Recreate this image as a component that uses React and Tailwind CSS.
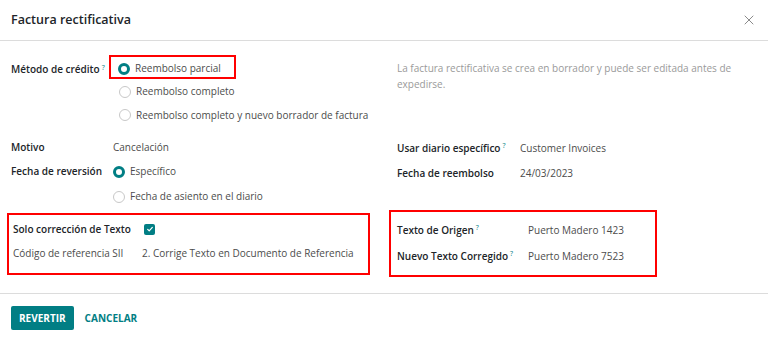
import { X } from "lucide-react";

const font = { fontFamily: '"Open Sans", "Noto Sans", sans-serif' };

const Help = () => (
  <sup className="ml-[2px] text-[7px] font-normal text-[#017e84]">?</sup>
);

const Radio = ({ checked, children }) => (
  <div className="flex items-center gap-[5px] whitespace-nowrap">
    {checked ? (
      <span className="inline-block h-[12px] w-[12px] rounded-full border-[3.5px] border-[#017e84] bg-white" />
    ) : (
      <span className="inline-block h-[12px] w-[12px] rounded-full border border-[#c8c8c8] bg-white" />
    )}
    <span className="text-[#4c4c4c]">{children}</span>
  </div>
);

const Check = () => (
  <span className="inline-flex h-[11px] w-[11px] items-center justify-center rounded-[2px] bg-[#017e84]">
    <svg viewBox="0 0 12 12" className="h-[8px] w-[8px]" fill="none">
      <path d="M2.5 6.5l2.3 2.2L9.5 3.5" stroke="white" strokeWidth="1.8" strokeLinecap="round" strokeLinejoin="round" />
    </svg>
  </span>
);

export default function App() {
  return (
    <div style={font} className="h-[342px] w-[768px] overflow-hidden bg-white text-[10px] text-[#212529]">
      <div className="flex h-[41px] items-center justify-between border-b border-[#dcdcdc] px-[11px]">
        <h4 className="text-[12.5px] font-semibold text-[#212529]">Factura rectificativa</h4>
        <X className="h-[16px] w-[16px] text-[#6c6c6c]" strokeWidth={1.2} />
      </div>

      <div className="flex h-[252px] pt-[14px]">
        <div className="w-[384px] pl-[7px]">
          <div className="flex items-start pl-[4px]">
            <div className="w-[98px] whitespace-nowrap pt-[7px] font-semibold">
              Método de crédito<Help />
            </div>
            <div className="flex flex-col items-start">
              <div className="flex h-[24px] w-[127px] items-center border-2 border-[#f00] pl-[7px] pt-[3px]">
                <Radio checked>Reembolso parcial</Radio>
              </div>
              <div className="flex h-[25px] items-center pl-[10px]">
                <Radio>Reembolso completo</Radio>
              </div>
              <div className="flex h-[22px] items-center pl-[10px]">
                <Radio>Reembolso completo y nuevo borrador de factura</Radio>
              </div>
            </div>
          </div>

          <div className="mt-[9px] flex h-[24px] items-center pl-[4px]">
            <div className="w-[102px] font-semibold">Motivo</div>
            <div className="text-[#4c4c4c]">Cancelación</div>
          </div>
          <div className="flex h-[25px] items-center pl-[4px]">
            <div className="w-[102px] whitespace-nowrap font-semibold">Fecha de reversión</div>
            <Radio checked>Específico</Radio>
          </div>
          <div className="flex h-[25px] items-center pl-[106px]">
            <Radio>Fecha de asiento en el diario</Radio>
          </div>

          <div className="mt-[4px] w-[363px] border-2 border-[#f00] pb-[8px] pl-[2px] pt-[2px]">
            <div className="flex h-[24px] items-center pl-[2px]">
              <div className="w-[131px] whitespace-nowrap font-semibold">Solo corrección de Texto</div>
              <Check />
            </div>
            <div className="flex h-[24px] items-center whitespace-nowrap pl-[2px]">
              <div className="w-[129px] text-[#4c4c4c]">Código de referencia SII</div>
              <div className="text-[#4c4c4c]">2. Corrige Texto en Documento de Referencia</div>
            </div>
          </div>
        </div>

        <div className="flex-1 pl-[13px] pr-[34px]">
          <p className="mt-[5px] leading-[16px] text-[#9a9a9a]">
            La factura rectificativa se crea en borrador y puede ser editada antes de expedirse.
          </p>
          <div className="mt-[44px] flex h-[24px] items-center whitespace-nowrap">
            <div className="w-[123px] font-semibold">
              Usar diario específico<Help />
            </div>
            <div className="text-[#4c4c4c]">Customer Invoices</div>
          </div>
          <div className="flex h-[26px] items-center whitespace-nowrap">
            <div className="w-[123px] font-semibold">Fecha de reembolso</div>
            <div className="text-[#4c4c4c]">24/03/2023</div>
          </div>

          <div className="-ml-[8px] mt-[24px] w-[268px] whitespace-nowrap border-2 border-[#f00] pb-[6px] pl-[6px] pt-[5px]">
            <div className="flex h-[26px] items-center">
              <div className="w-[131px] font-semibold">
                Texto de Origen<Help />
              </div>
              <div className="text-[#4c4c4c]">Puerto Madero 1423</div>
            </div>
            <div className="flex h-[26px] items-center">
              <div className="w-[131px] font-semibold">
                Nuevo Texto Corregido<Help />
              </div>
              <div className="text-[#4c4c4c]">Puerto Madero 7523</div>
            </div>
          </div>
        </div>
      </div>

      <div className="flex h-[49px] items-center gap-[11px] border-t border-[#dcdcdc] px-[11px]">
        <button className="h-[24px] rounded-[2px] bg-[#017e84] px-[8px] text-[10px] font-bold text-white">
          REVERTIR
        </button>
        <button className="text-[10px] font-bold text-[#017e84]">CANCELAR</button>
      </div>
    </div>
  );
}
